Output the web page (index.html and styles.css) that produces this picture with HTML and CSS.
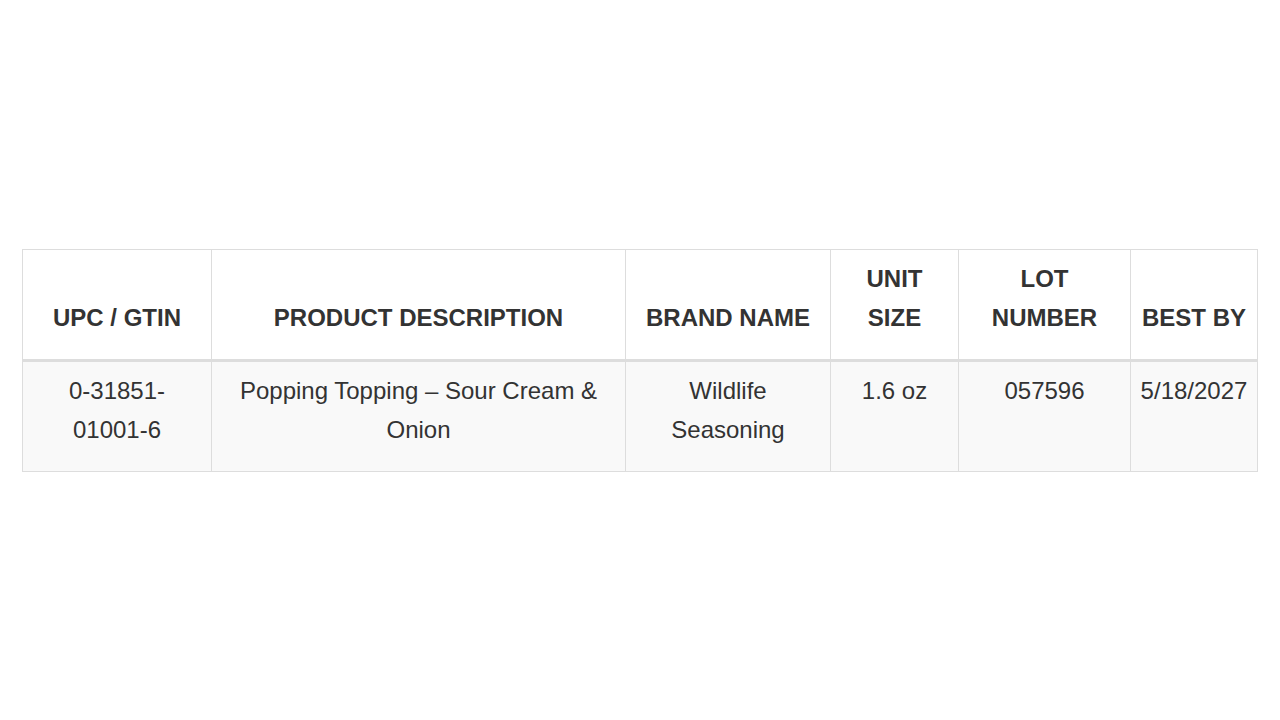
FILE: index.html
```html
<!DOCTYPE html>
<html>
<head>
<meta charset="utf-8">
<link rel="stylesheet" href="styles.css">
</head>
<body>
<main class="page">
<table class="recall">
<colgroup>
<col class="c1"><col class="c2"><col class="c3"><col class="c4"><col class="c5"><col class="c6">
</colgroup>
<thead>
<tr>
<th>UPC / GTIN</th>
<th>PRODUCT DESCRIPTION</th>
<th>BRAND NAME</th>
<th>UNIT SIZE</th>
<th>LOT NUMBER</th>
<th>BEST BY</th>
</tr>
</thead>
<tbody>
<tr>
<td class="upc">0-31851-01001-6</td>
<td>Popping Topping – Sour Cream &amp; Onion</td>
<td>Wildlife Seasoning</td>
<td>1.6 oz</td>
<td>057596</td>
<td>5/18/2027</td>
</tr>
</tbody>
</table>
</main>
</body>
</html>
```

FILE: styles.css
```css
html, body {
  margin: 0;
  padding: 0;
  background: #ffffff;
}
.page {
  padding: 249px 23px 0 22px;
  font-family: "Liberation Sans", Arial, Helvetica, sans-serif;
  color: #333333;
}
.recall {
  width: 1235px;
  border-collapse: collapse;
  table-layout: fixed;
  font-size: 24px;
  line-height: 39px;
}
.c1 { width: 189px; }
.c2 { width: 414px; }
.c3 { width: 205px; }
.c4 { width: 128px; }
.c5 { width: 172px; }
.c6 { width: 127px; }
.recall th,
.recall td {
  border: 1px solid #dddddd;
  text-align: center;
  padding: 9px 8px 22px;
}
.recall th {
  font-weight: bold;
  vertical-align: bottom;
  background: #ffffff;
  border-bottom: 3px solid #dddddd;
}
.recall td {
  vertical-align: top;
  background: #f9f9f9;
}
.recall td.upc {
  padding-left: 12px;
  padding-right: 12px;
}
```
